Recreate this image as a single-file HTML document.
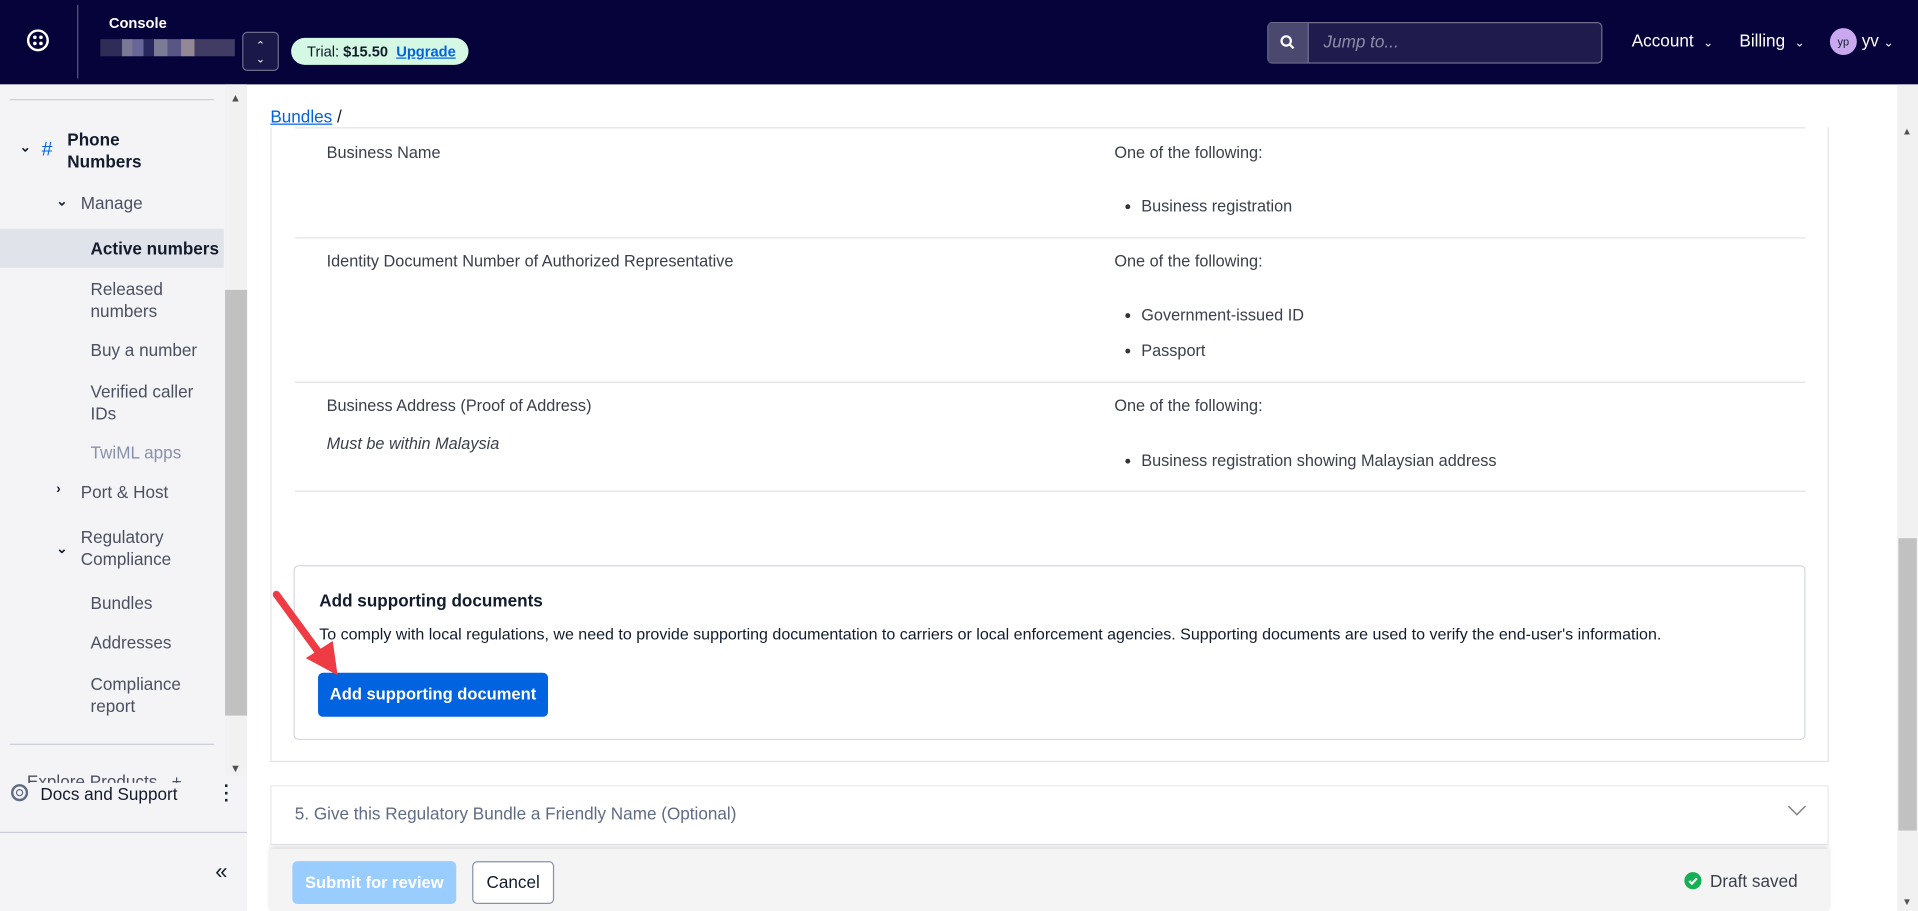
<!DOCTYPE html>
<html><head><meta charset="utf-8"><style>
*{box-sizing:border-box;margin:0;padding:0}
html,body{width:1918px;height:911px;overflow:hidden;background:#fff}
#w{position:absolute;left:0;top:0;width:1568px;height:745px;transform:scale(1.22321);transform-origin:0 0;font-family:"Liberation Sans",sans-serif;color:#121c2d}
.a{position:absolute}
.hd{left:0;top:0;width:1568px;height:69px;background:#06033a;color:#fff}
.sb{left:0;top:69px;width:202px;height:676px;background:#f4f4f6}
.side{font-size:14px;color:#121c2d}
.t{font-size:13.3px;color:#3a3f4a}
.row{left:241px;width:1235px;height:1px;background:#e1e3ea}
.bul{font-size:13.3px;color:#3a3f4a}
.bul:before{content:"";position:absolute;left:-13px;top:6px;width:4px;height:4px;border-radius:50%;background:#333}
</style></head><body><div id="w">
<div class="a hd">
 <div class="a" style="left:22px;top:24px;width:18px;height:18px;border:2.5px solid #fff;border-radius:50%"></div>
 <div class="a" style="left:27px;top:29px;width:3px;height:3px;background:#fff;border-radius:50%;box-shadow:5px 0 #fff,0 5px #fff,5px 5px #fff"></div>
 <div class="a" style="left:63px;top:4px;width:1px;height:60px;background:#5a5878"></div>
 <div class="a" style="left:89px;top:12px;font-size:12px;font-weight:bold">Console</div>
 <div class="a" style="left:82px;top:32px;width:110px;height:14px;background:linear-gradient(90deg,#2f2c58 0 16%,#7b7896 16% 24%,#676699 24% 32%,#27295e 32% 40%,#7b7b96 40% 50%,#575685 50% 60%,#958896 60% 70%,#403c63 70%)"></div>
 <div class="a" style="left:198px;top:26px;width:30px;height:32px;border:1px solid #6c6c8a;border-radius:4px;background:#1a1848;font-size:9px;text-align:center;line-height:11px;padding-top:5px">⌃<br>⌄</div>
 <div class="a" style="left:238px;top:31px;width:145px;height:22px;background:#d4f8e4;border-radius:11px;color:#121c2d;font-size:12px;line-height:22px;padding-left:13px">Trial: <b>$15.50</b> &nbsp;<b style="color:#0263e0;text-decoration:underline">Upgrade</b></div>
 <div class="a" style="left:1036px;top:18px;width:274px;height:34px;border:1px solid #6d6b8c;border-radius:4px;background:#1f1c4d"></div>
 <div class="a" style="left:1037px;top:19px;width:33px;height:32px;background:#4b4870;border-right:1px solid #6d6b8c"></div>
 <svg class="a" style="left:1046px;top:28px" width="13" height="13" viewBox="0 0 13 13"><circle cx="5.5" cy="5.5" r="3.8" stroke="#fff" stroke-width="1.8" fill="none"/><path d="M8.3 8.3L11.5 11.5" stroke="#fff" stroke-width="1.8"/></svg>
 <div class="a" style="left:1082px;top:26px;font-size:14px;font-style:italic;color:#8e8ca8">Jump to...</div>
 <div class="a" style="left:1334px;top:25px;font-size:14px">Account&nbsp; <span style="font-size:10px">⌄</span></div>
 <div class="a" style="left:1422px;top:25px;font-size:14px">Billing&nbsp; <span style="font-size:10px">⌄</span></div>
 <div class="a" style="left:1496px;top:23px;width:22px;height:22px;border-radius:50%;background:#c9a8f0;color:#121c2d;font-size:9px;text-align:center;line-height:22px">yp</div>
 <div class="a" style="left:1522px;top:25px;font-size:14px">yv <span style="font-size:10px">⌄</span></div>
</div>
<div class="a sb"></div>
<div class="a" style="left:8px;top:81px;width:167px;height:1px;background:#cacdd8"></div>
<div class="a" style="left:184px;top:69px;width:18px;height:565px;background:#f1f1f1"></div>
<div class="a" style="left:184px;top:237px;width:18px;height:348px;background:#c1c1c1"></div>
<div class="a" style="left:188px;top:75px;font-size:9px;color:#505050">▲</div>
<div class="a" style="left:188px;top:623px;font-size:9px;color:#505050">▼</div>
<div class="a side" style="left:16px;top:114px;font-size:11px;font-weight:bold">⌄</div>
<div class="a side" style="left:34px;top:114px;color:#0263e0;font-size:16px">#</div>
<div class="a side" style="left:55px;top:105px;font-weight:bold;line-height:18px">Phone<br>Numbers</div>
<div class="a side" style="left:46px;top:158px;font-size:11px;font-weight:bold">⌄</div>
<div class="a side" style="left:66px;top:158px;color:#4b5060">Manage</div>
<div class="a" style="left:0;top:187px;width:183px;height:32px;background:#e1e3ea"></div>
<div class="a side" style="left:74px;top:195px;font-weight:bold">Active numbers</div>
<div class="a side" style="left:74px;top:227px;color:#4b5060;line-height:18px">Released<br>numbers</div>
<div class="a side" style="left:74px;top:278px;color:#4b5060">Buy a number</div>
<div class="a side" style="left:74px;top:311px;color:#4b5060;line-height:18px">Verified caller<br>IDs</div>
<div class="a side" style="left:74px;top:362px;color:#8891aa">TwiML apps</div>
<div class="a side" style="left:46px;top:394px;font-size:11px;font-weight:bold">›</div>
<div class="a side" style="left:66px;top:394px;color:#4b5060">Port &amp; Host</div>
<div class="a side" style="left:46px;top:442px;font-size:11px;font-weight:bold">⌄</div>
<div class="a side" style="left:66px;top:430px;color:#4b5060;line-height:18px">Regulatory<br>Compliance</div>
<div class="a side" style="left:74px;top:485px;color:#4b5060">Bundles</div>
<div class="a side" style="left:74px;top:517px;color:#4b5060">Addresses</div>
<div class="a side" style="left:74px;top:550px;color:#4b5060;line-height:18px">Compliance<br>report</div>
<div class="a" style="left:8px;top:608px;width:167px;height:1px;background:#cacdd8"></div>
<div class="a" style="left:0;top:630px;width:184px;height:10px;overflow:hidden"><div style="margin:1px 0 0 22px;font-size:14px;color:#4b5060">Explore Products&nbsp;&nbsp;&nbsp;+</div></div>
<div class="a" style="left:9px;top:641px;width:14px;height:14px;border:2px solid #606b85;border-radius:50%"></div>
<div class="a" style="left:13px;top:645px;width:6px;height:6px;border:1.5px solid #606b85;border-radius:50%"></div>
<div class="a side" style="left:33px;top:641px;color:#121c2d">Docs and Support</div>
<div class="a side" style="left:183px;top:639px;font-weight:bold;line-height:6px">·<br>·<br>·</div>
<div class="a" style="left:0;top:680px;width:202px;height:1px;background:#cacdd8"></div>
<div class="a" style="left:176px;top:702px;font-size:18px;color:#121c2d">«</div>
<div class="a" style="left:221px;top:87px;font-size:14px;color:#121c2d"><span style="color:#0263e0;text-decoration:underline">Bundles</span> /</div>
<div class="a" style="left:221px;top:104px;width:1274px;height:519px;border:1px solid #e1e3ea;border-top:none"></div>
<div class="a row" style="top:104px"></div>
<div class="a t" style="left:267px;top:117px">Business Name</div>
<div class="a t" style="left:911px;top:117px">One of the following:</div>
<div class="a bul" style="left:933px;top:161px">Business registration</div>
<div class="a row" style="top:194px"></div>
<div class="a t" style="left:267px;top:206px">Identity Document Number of Authorized Representative</div>
<div class="a t" style="left:911px;top:206px">One of the following:</div>
<div class="a bul" style="left:933px;top:250px">Government-issued ID</div>
<div class="a bul" style="left:933px;top:279px">Passport</div>
<div class="a row" style="top:312px"></div>
<div class="a t" style="left:267px;top:324px">Business Address (Proof of Address)</div>
<div class="a t" style="left:267px;top:355px;font-style:italic">Must be within Malaysia</div>
<div class="a t" style="left:911px;top:324px">One of the following:</div>
<div class="a bul" style="left:933px;top:369px">Business registration showing Malaysian address</div>
<div class="a row" style="top:401px"></div>
<div class="a" style="left:240px;top:462px;width:1236px;height:143px;border:1px solid #d5d8e0;border-radius:4px"></div>
<div class="a" style="left:261px;top:483px;font-size:14px;font-weight:bold">Add supporting documents</div>
<div class="a" style="left:261px;top:511px;font-size:13.1px;color:#121c2d">To comply with local regulations, we need to provide supporting documentation to carriers or local enforcement agencies. Supporting documents are used to verify the end-user's information.</div>
<div class="a" style="left:260px;top:550px;width:188px;height:36px;background:#0263e0;border-radius:4px;color:#fff;font-size:13.5px;font-weight:bold;text-align:center;line-height:36px">Add supporting document</div>
<svg class="a" style="left:218px;top:478px" width="70" height="80" viewBox="0 0 70 80"><path d="M8 8L46 60" stroke="#ef3b43" stroke-width="6" stroke-linecap="round"/><path d="M32 60L58 74L54 46Z" fill="#ef3b43"/></svg>
<div class="a" style="left:221px;top:642px;width:1274px;height:49px;border:1px solid #e8e9ee"></div>
<div class="a" style="left:241px;top:657px;font-size:14px;color:#606b85">5. Give this Regulatory Bundle a Friendly Name (Optional)</div>
<svg class="a" style="left:1461px;top:658px" width="16" height="10"><path d="M1 1L8 8L15 1" stroke="#888" stroke-width="1.3" fill="none"/></svg>
<div class="a" style="left:221px;top:694px;width:1274px;height:51px;background:#f4f4f4;box-shadow:0 -2px 4px rgba(0,0,0,.15)"></div>
<div class="a" style="left:239px;top:704px;width:134px;height:35px;background:#99cdff;border-radius:4px;color:#fff;font-size:13.5px;font-weight:bold;text-align:center;line-height:35px">Submit for review</div>
<div class="a" style="left:386px;top:704px;width:67px;height:35px;background:#fff;border:1px solid #8891aa;border-radius:4px;font-size:14px;text-align:center;line-height:33px">Cancel</div>
<div class="a" style="left:1377px;top:713px;width:14px;height:14px;border-radius:50%;background:#14b053"></div>
<svg class="a" style="left:1377px;top:713px" width="14" height="14"><path d="M4 7.2L6.2 9.4L10.2 5" stroke="#fff" stroke-width="1.8" fill="none"/></svg>
<div class="a" style="left:1398px;top:712px;font-size:14px;color:#3a3f4a">Draft saved</div>
<div class="a" style="left:1551px;top:69px;width:17px;height:676px;background:#f1f1f1"></div>
<div class="a" style="left:1552px;top:440px;width:15px;height:239px;background:#c1c1c1"></div>
<div class="a" style="left:1555px;top:103px;font-size:8px;color:#505050">▲</div>
<div class="a" style="left:1555px;top:733px;font-size:8px;color:#505050">▼</div>
</div></body></html>
